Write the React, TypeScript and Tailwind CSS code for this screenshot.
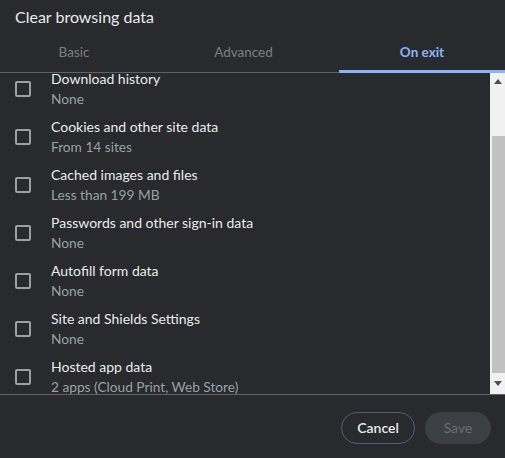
import React from "react";

const items = [
  ["Download history", "None"],
  ["Cookies and other site data", "From 14 sites"],
  ["Cached images and files", "Less than 199 MB"],
  ["Passwords and other sign-in data", "None"],
  ["Autofill form data", "None"],
  ["Site and Shields Settings", "None"],
  ["Hosted app data", "2 apps (Cloud Print, Web Store)"],
];

export default function App() {
  return (
    <div
      className="w-[505px] h-[458px] bg-[#292a2d] flex flex-col overflow-hidden"
      style={{ fontFamily: "Lato, 'Noto Sans', sans-serif" }}
    >
      <div className="h-[36px] flex items-center px-[15px] text-[16px] text-[#e8eaed] pb-[2px]">
        Clear browsing data
      </div>
      <div className="h-[37px] flex border-b border-[#5f6368] text-[13.5px]">
        <div className="w-[148px] flex items-center justify-center text-[#7c7f84] -mb-px pb-[4px]">Basic</div>
        <div className="w-[191px] flex items-center justify-center text-[#7c7f84] -mb-px pb-[4px]">Advanced</div>
        <div className="flex-1 flex items-center justify-center text-[#8ab4f8] font-bold border-b-[3px] border-[#8ab4f8] -mb-px pb-[1px]">
          On exit
        </div>
      </div>
      <div className="h-[322px] flex border-b border-[#5f6368]">
        <div className="flex-1 overflow-hidden">
          <div className="-mt-[8px]">
            {items.map(([t, s]) => (
              <div key={t} className="h-[48px] flex items-center">
                <div className="w-[16px] h-[16px] ml-[15px] border-2 border-[#9aa0a6] rounded-[2px]" />
                <div className="ml-[20px] flex flex-col">
                  <div className="text-[14px] leading-[20px] text-[#e8eaed]">{t}</div>
                  <div className="text-[13.7px] leading-[20px] text-[#9aa0a6]">{s}</div>
                </div>
              </div>
            ))}
          </div>
        </div>
        <div className="w-[15px] bg-[#f1f1f1] flex flex-col items-end">
          <div className="h-[17px] w-full flex items-center justify-center">
            <svg width="8" height="5" viewBox="0 0 8 5"><path d="M0 5L4 0L8 5Z" fill="#505050" /></svg>
          </div>
          <div className="h-[46px]" />
          <div className="w-[13px] h-[237px] bg-[#c1c1c1]" />
          <div className="flex-1 w-full flex items-center justify-center">
            <svg width="8" height="5" viewBox="0 0 8 5"><path d="M0 0L4 5L8 0Z" fill="#505050" /></svg>
          </div>
        </div>
      </div>
      <div className="flex-1 flex items-center justify-end gap-[10px] pr-[14px] pt-[2px]">
        <button className="h-[32px] w-[74px] rounded-full border border-[#5c5a78] text-[14px] font-semibold text-[#e8eaed]">
          Cancel
        </button>
        <button className="h-[32px] w-[66px] rounded-full bg-[#3c3f43] text-[14px] text-[#6b6e72]">
          Save
        </button>
      </div>
    </div>
  );
}
